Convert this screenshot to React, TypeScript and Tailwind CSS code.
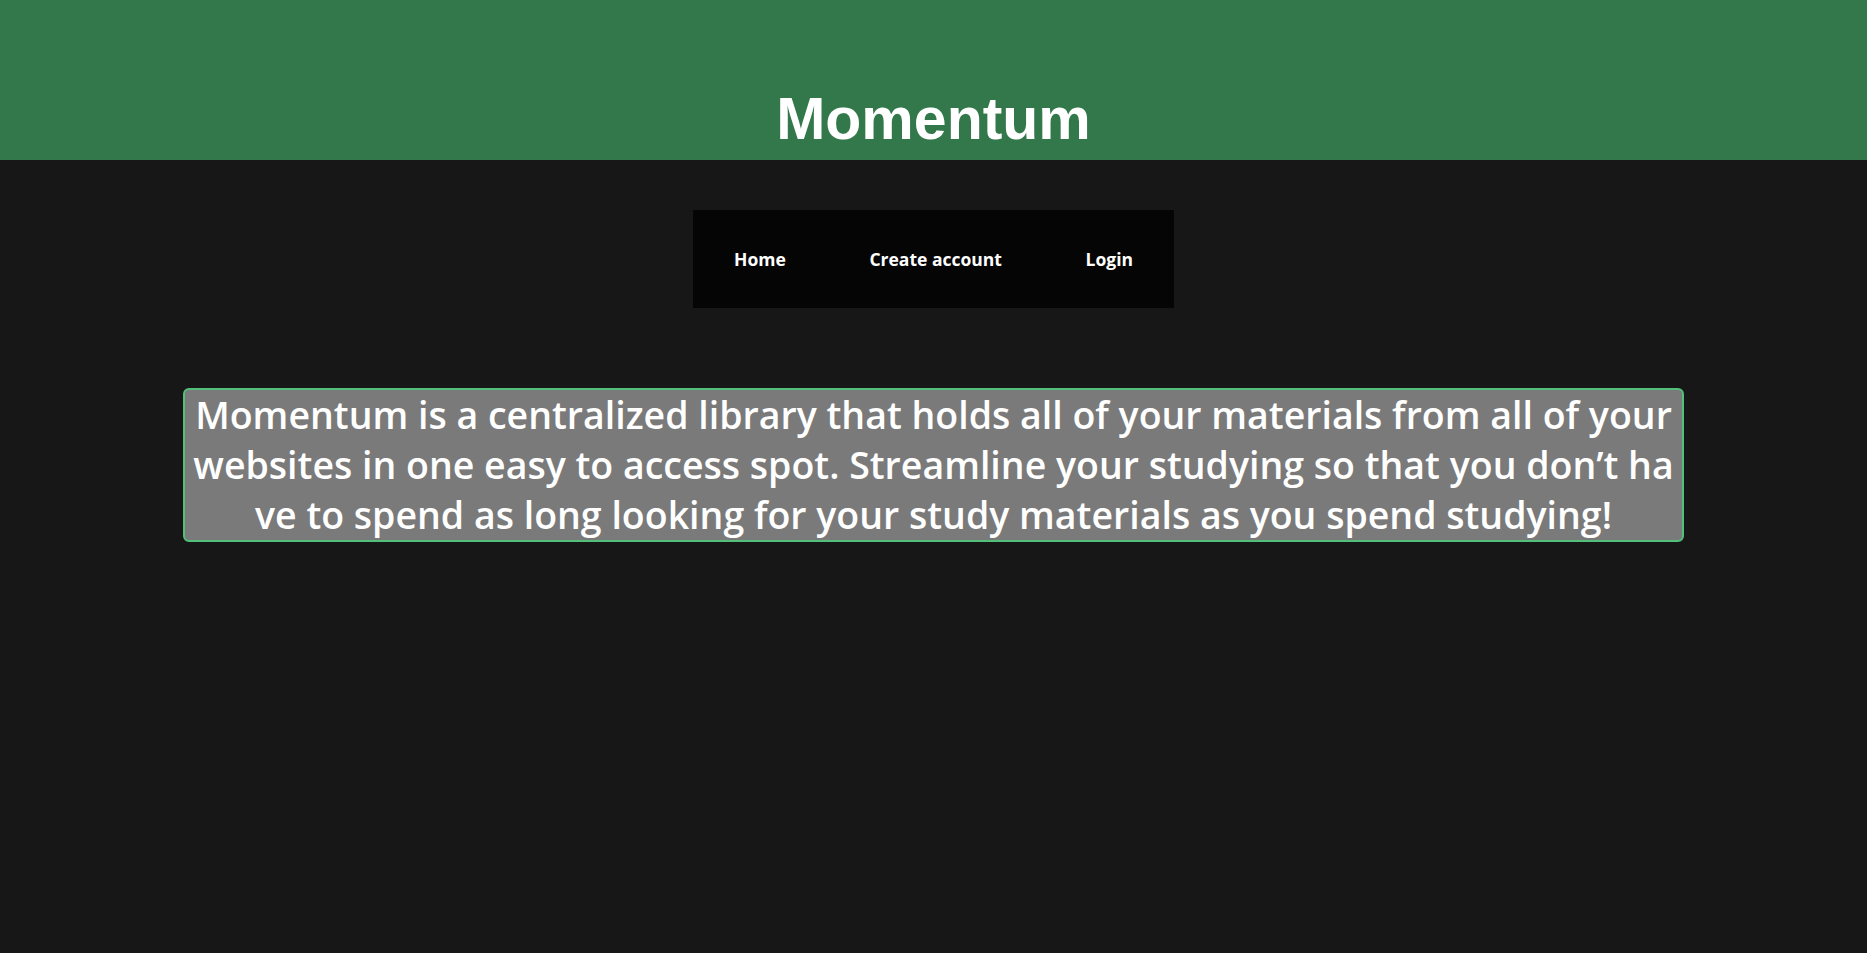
const lines = [
  "Momentum is a centralized library that holds all of your materials from all of your",
  "websites in one easy to access spot. Streamline your studying so that you don’t ha",
  "ve to spend as long looking for your study materials as you spend studying!",
];

const App = () => {
  return (
    <div className="min-h-screen bg-[#171717] font-['Open_Sans',sans-serif]">
      <header className="h-[160px] bg-[#32784a] flex items-end justify-center pb-[11px]">
        <h1 className="font-['Liberation_Sans',Arial,sans-serif] font-bold text-[59px] leading-none text-white">
          Momentum
        </h1>
      </header>

      <nav className="mt-[50px] mx-auto w-[481px] h-[98px] bg-[#050505] flex items-center justify-between px-[41px] text-white font-bold text-[17.5px]">
        <a href="#">Home</a>
        <a href="#">Create account</a>
        <a href="#">Login</a>
      </nav>

      <div className="mt-[80px] mx-auto w-[1501px] border-2 border-[#52c07a] rounded-[6px] bg-[#7a7a7a] text-white text-center text-[37.5px] font-semibold leading-[50px]">
        {lines.map((line, i) => (
          <p key={i} className="whitespace-nowrap">{line}</p>
        ))}
      </div>
    </div>
  );
};

export default App;
